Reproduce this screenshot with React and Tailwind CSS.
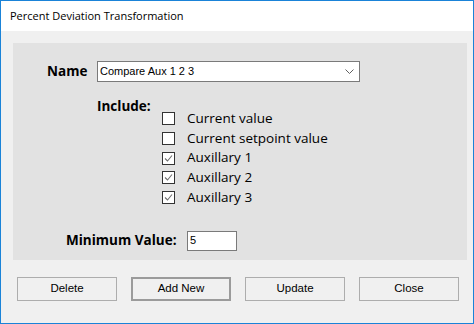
import React from "react";

const ui = { fontFamily: '"Open Sans", "Noto Sans", sans-serif' };
const sans = { fontFamily: '"Liberation Sans", Arial, sans-serif' };

const Check = ({ checked, label }) => (
  <div className="flex h-[19.7px] items-start">
    <div className="mt-[0.3px] flex h-[13px] w-[13px] items-center justify-center border border-[#333333] bg-white">
      {checked && (
        <svg width="9" height="9" viewBox="0 0 9 9">
          <path d="M1 4.5 L3.5 7 L8 1.5" fill="none" stroke="#6e6e6e" strokeWidth="1.1" />
        </svg>
      )}
    </div>
    <span className="ml-[12px] -mt-[3px] text-[13.5px] leading-[18px] text-black">{label}</span>
  </div>
);

const Btn = ({ children, primary }) => (
  <div
    className={
      "flex h-[24px] w-[100px] items-center justify-center bg-[#f0f0f0] text-[11.5px] text-black " +
      (primary ? "border-2 border-[#9b9b9b]" : "border border-[#adadad]")
    }
    style={sans}
  >
    {children}
  </div>
);

export default function App() {
  return (
    <div className="flex h-[324px] w-[474px] flex-col border border-[#1a83d8] bg-[#f0f0f0]" style={ui}>
      <div className="flex h-[30px] items-center bg-white pl-[9px]">
        <span className="text-[11px] text-black">Percent Deviation Transformation</span>
      </div>

      <div className="ml-[12px] mr-[6px] mt-[12px] flex h-[217px] flex-col bg-[#e2e2e2]">
        <div className="ml-[34px] mt-[18px] flex items-center">
          <span className="w-[50px] text-[13.5px] font-bold text-black">Name</span>
          <div className="relative flex h-[21px] w-[263px] items-center border border-[#7a7a7a] bg-white pl-[2px]">
            <span className="text-[11px] text-black" style={sans}>Compare Aux 1 2 3</span>
            <svg className="absolute right-[5px] top-[7px]" width="9" height="6" viewBox="0 0 9 6">
              <path d="M0.5 0.5 L4.5 4.5 L8.5 0.5" fill="none" stroke="#606060" strokeWidth="1" />
            </svg>
          </div>
        </div>

        <div className="ml-[84px] mt-[15px] text-[13.5px] font-bold leading-[18px] text-black">Include:</div>

        <div className="ml-[149px] mt-[-3px] flex flex-col">
          <Check label="Current value" />
          <Check label="Current setpoint value" />
          <Check checked label="Auxillary 1" />
          <Check checked label="Auxillary 2" />
          <Check checked label="Auxillary 3" />
        </div>

        <div className="ml-[53px] mt-[20px] flex items-center">
          <span className="w-[121px] text-[13.5px] font-bold text-black">Minimum Value:</span>
          <div className="flex h-[20px] w-[50px] items-center border border-[#7a7a7a] bg-white pl-[2px]">
            <span className="text-[11px] text-black" style={sans}>5</span>
          </div>
        </div>
      </div>

      <div className="ml-[16px] mt-[17px] flex gap-[14px]">
        <Btn>Delete</Btn>
        <Btn primary>Add New</Btn>
        <Btn>Update</Btn>
        <Btn>Close</Btn>
      </div>
    </div>
  );
}
